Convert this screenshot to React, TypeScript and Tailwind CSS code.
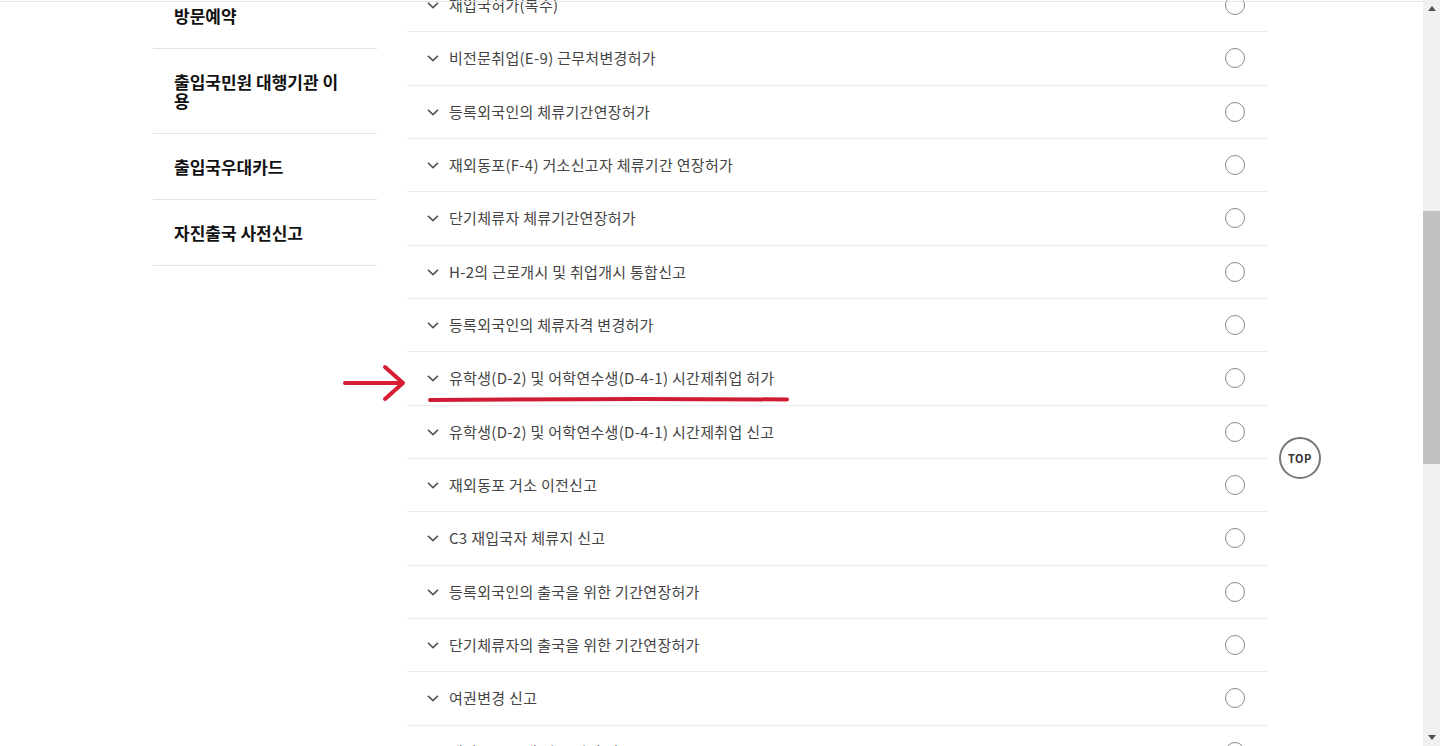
import React from "react";

const sideItems = ["방문예약", "출입국민원 대행기관 이용", "출입국우대카드", "자진출국 사전신고"];

const rows = [
  "재입국허가(복수)",
  "비전문취업(E-9) 근무처변경허가",
  "등록외국인의 체류기간연장허가",
  "재외동포(F-4) 거소신고자 체류기간 연장허가",
  "단기체류자 체류기간연장허가",
  "H-2의 근로개시 및 취업개시 통합신고",
  "등록외국인의 체류자격 변경허가",
  "유학생(D-2) 및 어학연수생(D-4-1) 시간제취업 허가",
  "유학생(D-2) 및 어학연수생(D-4-1) 시간제취업 신고",
  "재외동포 거소 이전신고",
  "C3 재입국자 체류지 신고",
  "등록외국인의 출국을 위한 기간연장허가",
  "단기체류자의 출국을 위한 기간연장허가",
  "여권변경 신고",
  "재외동포 국내 거소 변경 신고",
];

function Chevron() {
  return (
    <svg width="12" height="12" viewBox="0 0 12 12" className="shrink-0">
      <path d="M1 3.8 L6 8.6 L11 3.8" fill="none" stroke="#555" strokeWidth="1.6" />
    </svg>
  );
}

export default function App() {
  return (
    <div
      className="relative flex h-[746px] w-[1440px] overflow-hidden bg-white"
      style={{ fontFamily: '"Noto Sans CJK KR", "Noto Sans", sans-serif' }}
    >
      <div className="relative flex-1 overflow-hidden">
        <div className="absolute inset-x-0 top-[1px] z-10 h-px bg-[#e4e4e4]" />

        <div className="ml-[153px] flex w-[1115px] gap-[30px]">
          {/* sidebar */}
          <div className="mt-[-17px] w-[224px] shrink-0">
            {sideItems.map((s) => (
              <div
                key={s}
                className="border-b border-[#e3e3e3] px-[21px] py-[23px] text-[17px] font-bold leading-[19px] text-[#111]"
              >
                <div className="w-[170px]">{s}</div>
              </div>
            ))}
          </div>

          {/* list */}
          <div className="mt-[-21px] flex-1">
            {rows.map((r) => (
              <div
                key={r}
                className="flex h-[53.33px] items-center border-b border-[#ececec] pl-[20px] pr-[23px]"
              >
                <Chevron />
                <span className="ml-[10px] flex-1 text-[15px] tracking-[0.3px] text-[#444]">{r}</span>
                <span className="h-[20px] w-[20px] rounded-full border-[1.5px] border-[#8a8a8a]" />
              </div>
            ))}
          </div>
        </div>

        {/* TOP button */}
        <div className="absolute left-[1279px] top-[437px] flex h-[42px] w-[42px] items-center justify-center rounded-full border-2 border-[#777] bg-white text-[11px] font-bold tracking-[0.5px] text-[#333]">
          TOP
        </div>

        {/* red annotation */}
        <svg className="absolute left-[340px] top-[362px]" width="70" height="44" viewBox="0 0 70 44">
          <path d="M5 21 L62 21" stroke="#d81d33" strokeWidth="4" strokeLinecap="round" fill="none" />
          <path d="M45 5 L63 21 L45 37" stroke="#d81d33" strokeWidth="4" strokeLinecap="round" strokeLinejoin="round" fill="none" />
        </svg>
        <svg className="absolute left-[425px] top-[394px]" width="370" height="12" viewBox="0 0 370 12">
          <path d="M5 6 Q 180 4.5 362 5.5" stroke="#cf1c34" strokeWidth="4" strokeLinecap="round" fill="none" />
        </svg>
      </div>

      {/* scrollbar */}
      <div className="flex w-[17px] shrink-0 flex-col bg-[#f1f1f1]">
        <div className="flex h-[17px] items-center justify-center">
          <svg width="8" height="5" viewBox="0 0 8 5">
            <path d="M0 5 L4 0 L8 5 Z" fill="#505050" />
          </svg>
        </div>
        <div className="mt-[194px] h-[253px] w-full bg-[#c1c1c1]" />
        <div className="flex-1" />
        <div className="flex h-[17px] items-center justify-center">
          <svg width="8" height="5" viewBox="0 0 8 5">
            <path d="M0 0 L8 0 L4 5 Z" fill="#505050" />
          </svg>
        </div>
      </div>
    </div>
  );
}
